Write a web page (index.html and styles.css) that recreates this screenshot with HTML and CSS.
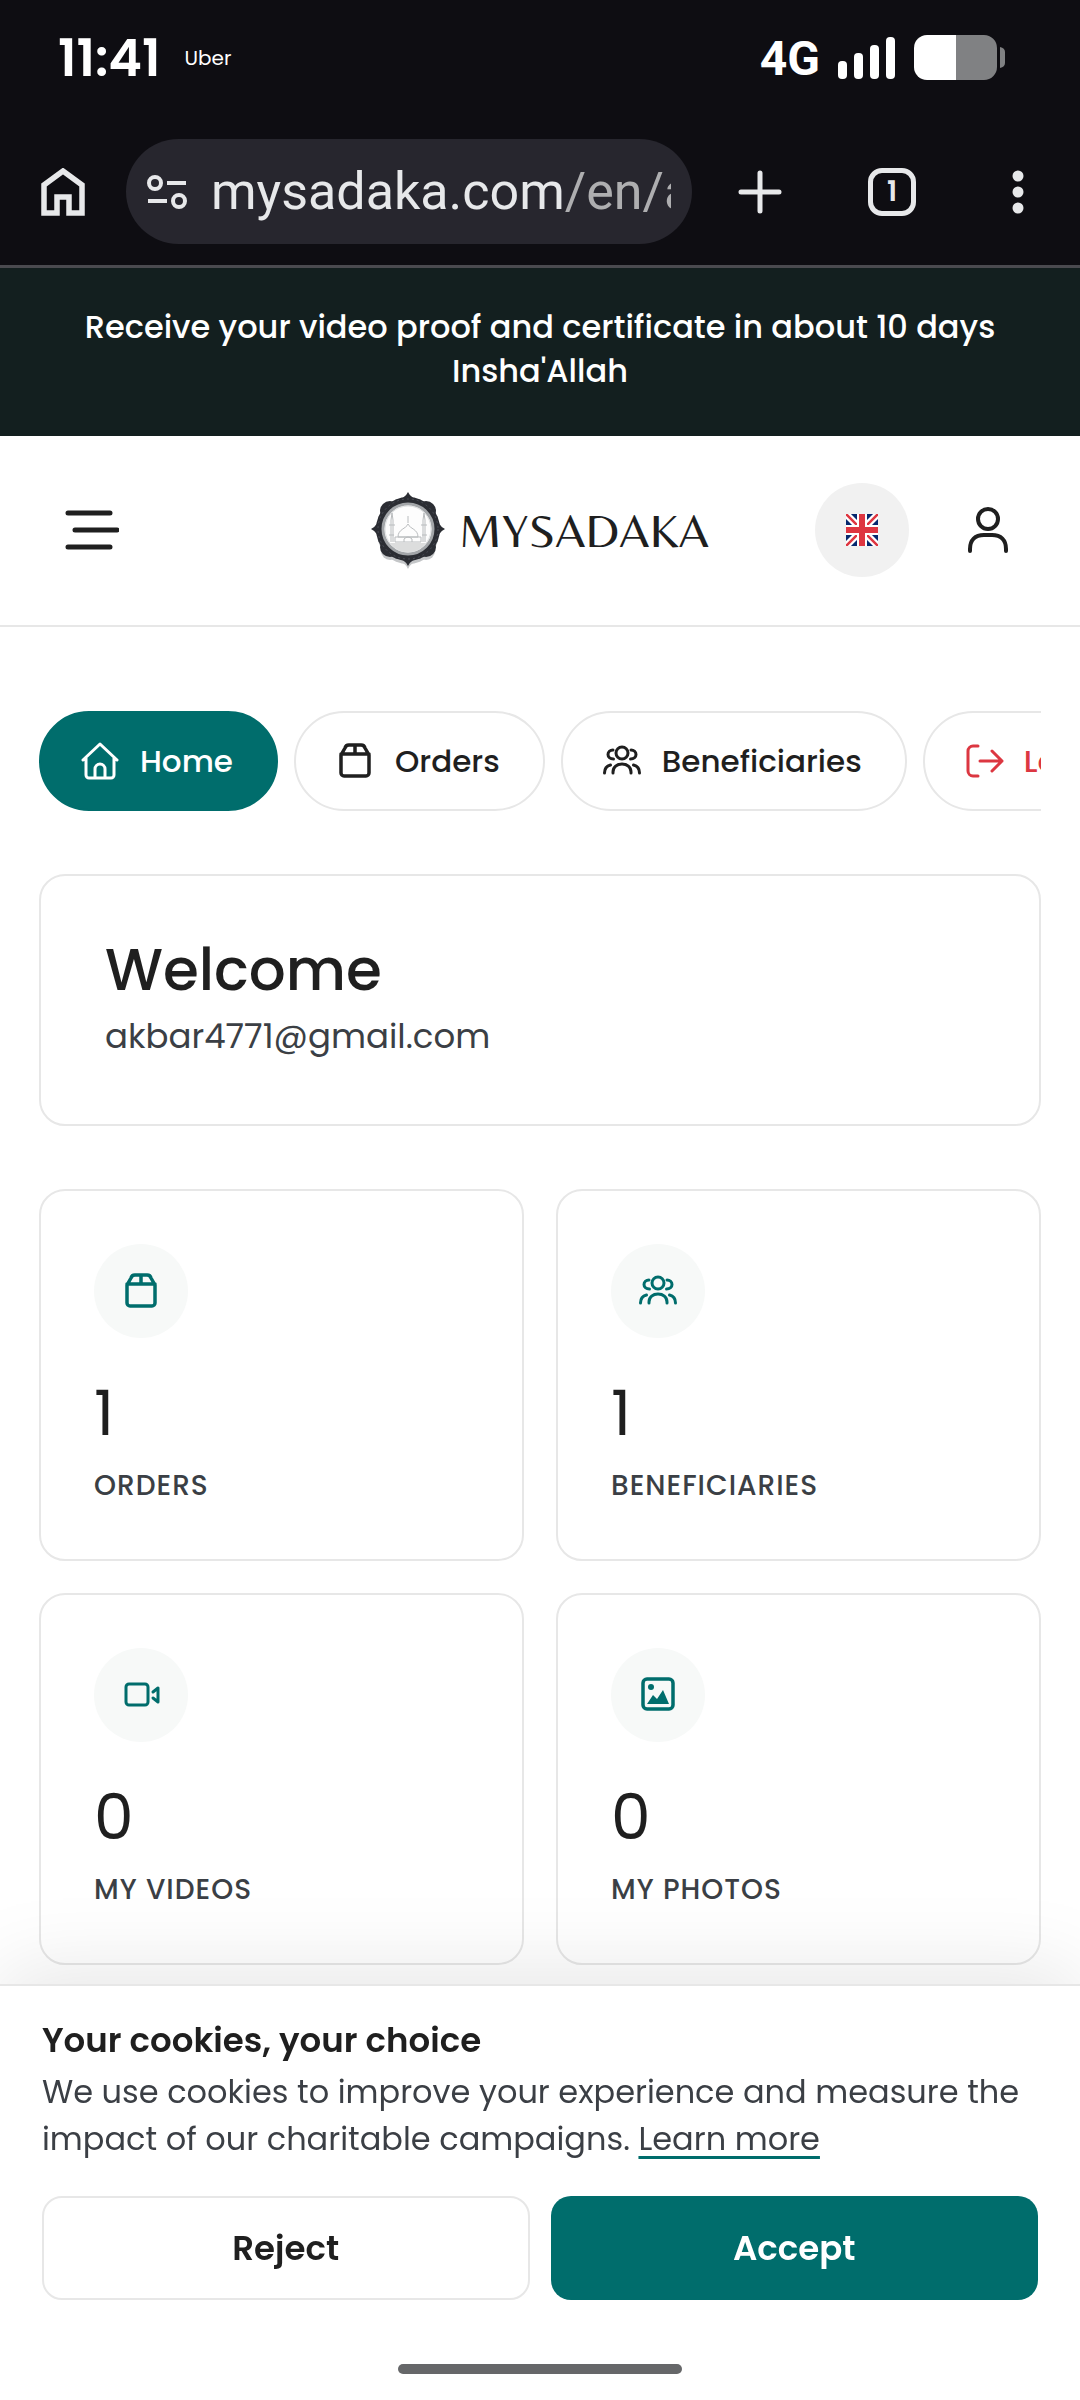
FILE: index.html
```html
<!DOCTYPE html>
<html lang="en">
<head>
    <meta charset="UTF-8">
    <meta name="viewport" content="width=device-width, initial-scale=1.0">
    <title>My account - MySadaka</title>
    <link rel="stylesheet" href="styles.css">
</head>
<body>

    <!-- Shared icons -->
    <svg class="sprite" aria-hidden="true">
        <symbol id="icon-box" viewBox="0 0 40 40">
            <path stroke-width="3.500" d="M6 14v18a3 3 0 0 0 3 3h22a3 3 0 0 0 3-3V14l-4-7a4 4 0 0 0-4-3H14a4 4 0 0 0-4 3zM6 13h28M20 4v9"/>
        </symbol>
        <symbol id="icon-people" viewBox="0 0 40 40">
            <circle cx="20" cy="12" r="6"/>
            <path d="M11 32v-1c0-5 4-8 9-8s9 3 9 8v1M11 9c-3 0-5 2-5 4.500s2 4.500 5.500 4.500M29 9c3 0 5 2 5 4.500s-2 4.500-5.500 4.500M2.500 32c0-4 2-7 6-8M37.500 32c0-4-2-7-6-8"/>
        </symbol>
    </svg>

    <!-- Phone status bar -->
    <div class="status-bar">
        <span class="time">11:41</span>
        <span class="carrier">Uber</span>
        <span class="network">4G</span>
        <svg class="signal" viewBox="0 0 58 42" aria-hidden="true">
            <rect x="0" y="24" width="9" height="18" rx="4"/>
            <rect x="16" y="16" width="9" height="26" rx="4"/>
            <rect x="32" y="8" width="9" height="34" rx="4"/>
            <rect x="48" y="0" width="9" height="42" rx="4"/>
        </svg>
        <svg class="battery" viewBox="0 0 92 46" aria-hidden="true">
            <path d="M42 0h28a13 13 0 0 1 13 13v19a13 13 0 0 1-13 13H42zM86 12q5 1 5 5v11q0 4-5 5z" fill="#808183"/>
            <path d="M42 0H13A13 13 0 0 0 0 13v19a13 13 0 0 0 13 13h29z" fill="#fff"/>
        </svg>
    </div>

    <!-- Browser toolbar -->
    <div class="toolbar">
        <button class="tool" aria-label="Home page">
            <svg width="44" height="48" viewBox="0 0 44 48" fill="none" stroke="#e7e8ea" stroke-width="5.500"><path d="M3 45V17L22 3l19 14v28H28V29H16v16z"/></svg>
        </button>
        <button class="address">
            <svg width="40" height="36" viewBox="0 0 40 36" fill="none" stroke="#e7e8ea" stroke-width="4"><circle cx="8" cy="9" r="6"/><circle cx="32" cy="27" r="6"/><path d="M20 9h19M1 27h19"/></svg>
            <span class="url">mysadaka.com<span class="path">/en/a</span></span>
        </button>
        <button class="tool" aria-label="New tab">
            <svg width="44" height="44" viewBox="0 0 44 44" fill="none" stroke="#e7e8ea" stroke-width="5" stroke-linecap="round"><path d="M22 3v38M3 22h38"/></svg>
        </button>
        <button class="tool tabs-count" aria-label="Open tabs"><span>1</span></button>
        <button class="tool" aria-label="Menu">
            <svg width="12" height="44" viewBox="0 0 12 44" fill="#e7e8ea"><circle cx="6" cy="6" r="5.500"/><circle cx="6" cy="22" r="5.500"/><circle cx="6" cy="38" r="5.500"/></svg>
        </button>
    </div>

    <p class="announcement">Receive your video proof and certificate in about 10 days Insha'Allah</p>

    <header class="header">
        <button class="round" aria-label="Open menu">
            <svg width="54" height="42" viewBox="0 0 54 42" fill="none" stroke="#1f1f1f" stroke-width="5" stroke-linecap="round"><path d="M3 4h42M10 21h42M3 38h42"/></svg>
        </button>
        <a class="logo" href="#">
            <svg width="74" height="78" viewBox="0 0 74 78" aria-hidden="true">
                <!-- medallion: soft shadow, dark petals, inner disc -->
                <g fill="#c4c6c8">
                    <circle cx="37" cy="42" r="31"/>
                    <circle cx="19" cy="60" r="9"/>
                    <circle cx="55" cy="60" r="9"/>
                    <path d="M26 70q8 1 11 8 3-7 11-8z"/>
                </g>
                <g fill="#2b2d33">
                    <circle cx="37" cy="38" r="32"/>
                    <circle cx="19" cy="20" r="10"/>
                    <circle cx="55" cy="20" r="10"/>
                    <circle cx="19" cy="56" r="10"/>
                    <circle cx="55" cy="56" r="10"/>
                    <path d="M24 9q10-1 13-8 3 7 13 8zM24 67q10 1 13 8 3-7 13-8zM8 25q-1 10-8 13 7 3 8 13zM66 25q1 10 8 13-7 3-8 13z"/>
                </g>
                <circle cx="37" cy="38" r="30" fill="none" stroke="#4b4e57" stroke-dasharray="2 3"/>
                <circle cx="37" cy="38" r="25" fill="#fdfdfd" stroke="#a3a6a9" stroke-width="3"/>
                <circle cx="37" cy="38" r="23" fill="none" stroke="#dfe1e2"/>
                <path d="M19 52h36q-7 9-18 9t-18-9z" fill="#dcdddd"/>
                <g fill="none" stroke="#b9bcbe">
                    <path d="M27 46c0-8 8-8 10-13 2 5 10 5 10 13zM24 46h26v5H24zM37 25v7M20 51V29l1-7 1 7v22M52 51V29l1-7 1 7v22M18 34h6M50 34h6M33 51v-3q4-4 8 0v3M18 44h5M51 44h5"/>
                </g>
            </svg>
            <span>MYSADAKA</span>
        </a>
        <div class="header-actions">
            <button class="round language" aria-label="Language: English">
                <svg width="32" height="32" viewBox="0 0 32 32">
                    <path fill="#06286f" d="M0 0h32v32H0z"/>
                    <path stroke="#fff" stroke-width="7" d="M0 0l32 32M32 0L0 32"/>
                    <path stroke="#de3641" stroke-width="2.500" d="M0 0l32 32M32 0L0 32"/>
                    <path stroke="#fff" stroke-width="10" d="M16 0v32M0 16h32"/>
                    <path stroke="#de3641" stroke-width="6" d="M16 0v32M0 16h32"/>
                </svg>
            </button>
            <a class="round" href="#" aria-label="My account">
                <svg width="42" height="48" viewBox="0 0 42 48" fill="none" stroke="#1f1f1f" stroke-width="4" stroke-linecap="round"><circle cx="21" cy="13" r="10"/><path d="M3 45v-2c0-9 5-14 14-14h8c9 0 14 5 14 14v2"/></svg>
            </a>
        </div>
    </header>

    <main>
        <nav class="account-nav">
            <a class="active" href="#">
                <svg class="icon" viewBox="0 0 40 40"><path d="M3 19L20 3l17 16M6 17v17a3 3 0 0 0 3 3h22a3 3 0 0 0 3-3V17M15 37V28a5 5 0 0 1 10 0v9"/></svg>
                Home
            </a>
            <a href="#"><svg class="icon"><use href="#icon-box"/></svg>Orders</a>
            <a href="#"><svg class="icon"><use href="#icon-people"/></svg>Beneficiaries</a>
            <a class="logout" href="#">
                <svg class="icon" viewBox="0 0 40 40"><path d="M14 5H9a5 5 0 0 0-5 5v20a5 5 0 0 0 5 5h5M16 20h22M28 10l10 10-10 10"/></svg>
                Logout
            </a>
        </nav>

        <section class="card welcome">
            <h1>Welcome</h1>
            <p>akbar4771@gmail.com</p>
        </section>

        <section class="stats">
            <div class="card stat">
                <div class="badge"><svg class="icon"><use href="#icon-box"/></svg></div>
                <strong>1</strong>
                <span>ORDERS</span>
            </div>
            <div class="card stat">
                <div class="badge"><svg class="icon"><use href="#icon-people"/></svg></div>
                <strong>1</strong>
                <span>BENEFICIARIES</span>
            </div>
            <div class="card stat">
                <div class="badge"><svg class="icon" viewBox="0 0 40 40"><rect x="5" y="9" width="22" height="21" rx="3"/><path d="M32 17l5-4v14l-5-4"/></svg></div>
                <strong>0</strong>
                <span>MY VIDEOS</span>
            </div>
            <div class="card stat">
                <div class="badge"><svg class="icon" viewBox="0 0 40 40"><rect x="5" y="4" width="30" height="30" rx="4" stroke-width="3.500"/><circle class="solid" cx="13" cy="12" r="3"/><path class="solid" d="M9 29l6-9 4 4 6-9 6 14z"/></svg></div>
                <strong>0</strong>
                <span>MY PHOTOS</span>
            </div>
        </section>
    </main>

    <!-- Cookie consent -->
    <aside class="cookies">
        <h2>Your cookies, your choice</h2>
        <p>We use cookies to improve your experience and measure the impact of our charitable campaigns. <a href="#">Learn more</a></p>
        <div class="choices">
            <button class="reject">Reject</button>
            <button class="accept">Accept</button>
        </div>
        <div class="gesture-bar"></div>
    </aside>

</body>
</html>
```
FILE: styles.css
```css
* {
    box-sizing: border-box;
}

body {
    margin: 0;
    background-color: #fff;
    color: #1f1f1f;
    font-family: 'Poppins', 'Inter', sans-serif;
}

h1, h2, p {
    margin: 0;
}

button {
    border: none;
    padding: 0;
    background: none;
    color: inherit;
    font-family: inherit;
    cursor: pointer;
}

a {
    color: inherit;
    text-decoration: none;
}

svg {
    flex-shrink: 0;
}

.sprite {
    display: none;
}

.icon {
    width: 40px;
    height: 40px;
    fill: none;
    stroke: currentColor;
    stroke-width: 3px;
    stroke-linecap: round;
    stroke-linejoin: round;
}

.solid {
    fill: currentColor;
    stroke: none;
}

/* Phone and browser */
.status-bar {
    display: flex;
    align-items: center;
    height: 116px;
    padding: 0 74px 0 58px;
    background-color: #0e0d12;
    color: #fff;
}

.time {
    font-size: 51px;
    font-weight: 600;
}

.carrier {
    margin-left: 24px;
    font-size: 20px;
}

.network {
    margin-left: auto;
    font-family: 'Roboto', sans-serif;
    font-size: 48px;
    font-weight: 700;
}

.signal {
    width: 58px;
    height: 42px;
    margin-left: 18px;
    fill: #fff;
}

.battery {
    width: 92px;
    height: 46px;
    margin-left: 18px;
}

.toolbar {
    display: flex;
    align-items: center;
    height: 152px;
    padding: 2px 56px 0 41px;
    background-color: #0e0d12;
    border-bottom: 3px solid #4a4a4f;
    color: #e7e8ea;
}

.tool {
    display: flex;
    flex-shrink: 0;
}

.address {
    display: flex;
    flex: 1;
    align-items: center;
    gap: 24px;
    min-width: 0;
    height: 105px;
    margin: 0 46px 0 41px;
    padding: 0 21px;
    border-radius: 53px;
    background-color: #27262e;
}

.url {
    flex: 1;
    overflow: hidden;
    font-family: 'Google Sans', 'Roboto', sans-serif;
    font-size: 52px;
    line-height: 80px;
    text-align: left;
    white-space: nowrap;
}

.path {
    color: #aeaeb0;
}

.tabs-count {
    align-items: center;
    justify-content: center;
    width: 48px;
    height: 48px;
    margin: 0 96px 0 86px;
    border: 5px solid #e7e8ea;
    border-radius: 14px;
    font-size: 28px;
    font-weight: 600;
}

/* Site header */
.announcement {
    padding: 37px 80px 43px;
    background-color: #131f1f;
    color: #fff;
    font-size: 32px;
    font-weight: 500;
    line-height: 44px;
    text-align: center;
}

.header {
    display: grid;
    grid-template-columns: 1fr auto 1fr;
    align-items: center;
    padding: 47px 45px 48px;
    border-bottom: 2px solid #e7e7e7;
}

.round {
    display: flex;
    align-items: center;
    justify-content: center;
    width: 94px;
    height: 94px;
    border-radius: 50%;
}

.language {
    background-color: #f1f1f1;
}

.logo {
    display: flex;
    align-items: center;
    gap: 14px;
    font-family: 'Belleza', 'Lato', sans-serif;
    font-size: 48px;
}

.header-actions {
    display: flex;
    justify-content: flex-end;
    gap: 32px;
}

/* Account */
main {
    padding: 84px 39px 0;
}

.account-nav {
    display: flex;
    gap: 16px;
    overflow: hidden;
    margin-bottom: 63px;
}

.account-nav a {
    display: flex;
    flex-shrink: 0;
    align-items: center;
    gap: 20px;
    height: 100px;
    padding: 0 43px 0 39px;
    border: 2px solid #e7e7e7;
    border-radius: 50px;
    font-size: 31px;
    font-weight: 500;
}

.account-nav .active {
    background-color: #006d6c;
    border-color: #006d6c;
    color: #fff;
}

.account-nav .logout {
    color: #dc3741;
}

.card {
    border: 2px solid #e7e7e7;
    border-radius: 26px;
}

.welcome {
    margin-bottom: 63px;
    padding: 59px 64px 61px;
}

.welcome h1 {
    font-size: 58px;
    font-weight: 500;
    line-height: 70px;
}

.welcome p {
    margin-top: 4px;
    color: #3b3f45;
    font-size: 34px;
    line-height: 54px;
}

.stats {
    display: grid;
    grid-template-columns: 1fr 1fr;
    gap: 32px;
}

.stat {
    display: flex;
    flex-direction: column;
    padding: 53px 53px 52px;
}

.badge {
    display: flex;
    align-items: center;
    justify-content: center;
    width: 94px;
    height: 94px;
    border-radius: 50%;
    background-color: #f7f9f8;
    color: #006d6c;
}

.stat strong {
    margin: 35px 0 12px;
    font-size: 63px;
    font-weight: 400;
    line-height: 80px;
}

.stat span {
    color: #3b3f45;
    font-size: 28px;
    font-weight: 500;
    letter-spacing: 1px;
    line-height: 42px;
}

/* Cookie banner */
.cookies {
    position: fixed;
    right: 0;
    bottom: 0;
    left: 0;
    padding: 26px 42px;
    border-top: 2px solid #e7e7e7;
    background-color: #fff;
    box-shadow: 0 -12px 80px rgba(0, 0, 0, 0.1);
}

.cookies h2 {
    font-size: 34px;
    font-weight: 600;
    line-height: 56px;
}

.cookies p {
    color: #3b3f45;
    font-size: 32px;
    line-height: 47px;
}

.cookies p a {
    text-decoration: underline 3px #006d6c;
    text-underline-offset: 6px;
}

.choices {
    display: grid;
    grid-template-columns: 1fr 1fr;
    gap: 21px;
    margin-top: 34px;
}

.choices button {
    height: 104px;
    border-radius: 20px;
    font-size: 34px;
    font-weight: 600;
}

.reject {
    border: 2px solid #e7e7e7;
}

.accept {
    background-color: #006d6c;
    color: #fff;
}

.gesture-bar {
    width: 284px;
    height: 10px;
    margin: 64px auto 0;
    border-radius: 5px;
    background-color: #666769;
}
```
